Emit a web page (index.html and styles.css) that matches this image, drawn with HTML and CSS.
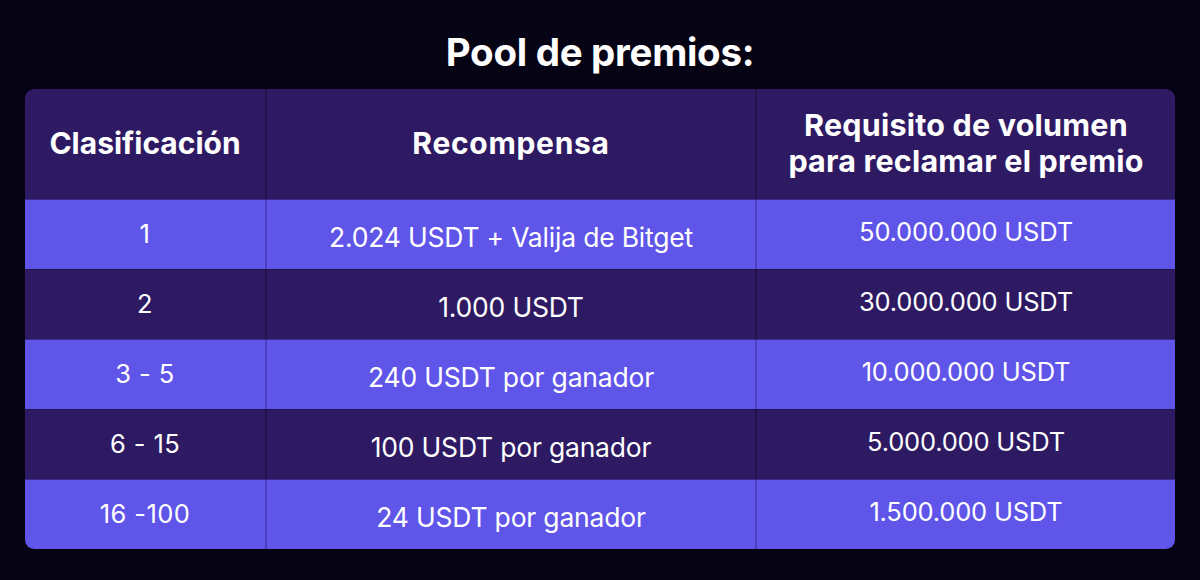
FILE: index.html
```html
<!DOCTYPE html>
<html lang="es">
<head>
<meta charset="utf-8">
<link rel="stylesheet" href="styles.css">
</head>
<body>
<main class="page">
  <h1 class="title">Pool de premios:</h1>
  <div class="table">
    <div class="row head">
      <div class="cell c1">Clasificación</div>
      <div class="cell c2">Recompensa</div>
      <div class="cell c3">Requisito de volumen<br>para reclamar el premio</div>
    </div>
    <div class="row light">
      <div class="cell c1">1</div>
      <div class="cell c2">2.024 USDT + Valija de Bitget</div>
      <div class="cell c3">50.000.000 USDT</div>
    </div>
    <div class="row dark">
      <div class="cell c1">2</div>
      <div class="cell c2">1.000 USDT</div>
      <div class="cell c3">30.000.000 USDT</div>
    </div>
    <div class="row light">
      <div class="cell c1">3 - 5</div>
      <div class="cell c2">240 USDT por ganador</div>
      <div class="cell c3">10.000.000 USDT</div>
    </div>
    <div class="row dark">
      <div class="cell c1">6 - 15</div>
      <div class="cell c2">100 USDT por ganador</div>
      <div class="cell c3">5.000.000 USDT</div>
    </div>
    <div class="row light last">
      <div class="cell c1">16 -100</div>
      <div class="cell c2">24 USDT por ganador</div>
      <div class="cell c3">1.500.000 USDT</div>
    </div>
  </div>
</main>
</body>
</html>
```

FILE: styles.css
```css
* { box-sizing: border-box; }
html, body {
  margin: 0;
  padding: 0;
  background: #060314;
}
body {
  width: 1200px;
  height: 580px;
  font-family: Inter, "Noto Sans", sans-serif;
  color: #ffffff;
}
.page {
  padding: 27px 25px 0 25px;
}
.title {
  margin: 0;
  height: 62px;
  font-size: 38.5px;
  font-weight: 700;
  line-height: 50px;
  text-align: center;
  letter-spacing: -0.3px;
}
.table {
  width: 1150px;
  border-radius: 9px;
  overflow: hidden;
}
.row {
  display: grid;
  grid-template-columns: 240px 490px 420px;
  height: 70px;
  border-top: 1px solid #22134d;
}
.row.light { border-top-color: #3a2b8f; }
.row.head {
  height: 110px;
  border-top: none;
  background: #2e1a63;
  font-weight: 700;
}
.row.light { background: #5f55e9; }
.row.dark { background: #2e1a63; }
.cell {
  display: flex;
  align-items: center;
  justify-content: center;
  text-align: center;
  font-size: 25.5px;
  letter-spacing: -0.2px;
  padding-bottom: 3px;
}
.cell.c1 {
  letter-spacing: 0.4px;
}
.cell.c2 {
  font-size: 26.5px;
  padding-bottom: 0;
  padding-top: 4px;
}
.cell.c3 {
  padding-bottom: 6px;
}
.row.head .cell {
  font-size: 30px;
  line-height: 36px;
  letter-spacing: 0;
  padding: 0 0 2px 0;
}
.row.head .cell.c2 {
  letter-spacing: 0.7px;
}
.row.head .cell.c3 {
  font-size: 30.5px;
  letter-spacing: 0.2px;
}
.cell + .cell {
  border-left: 2px solid #22134d;
}
.row.light .cell + .cell {
  border-left-color: #4a3fbf;
}
```
